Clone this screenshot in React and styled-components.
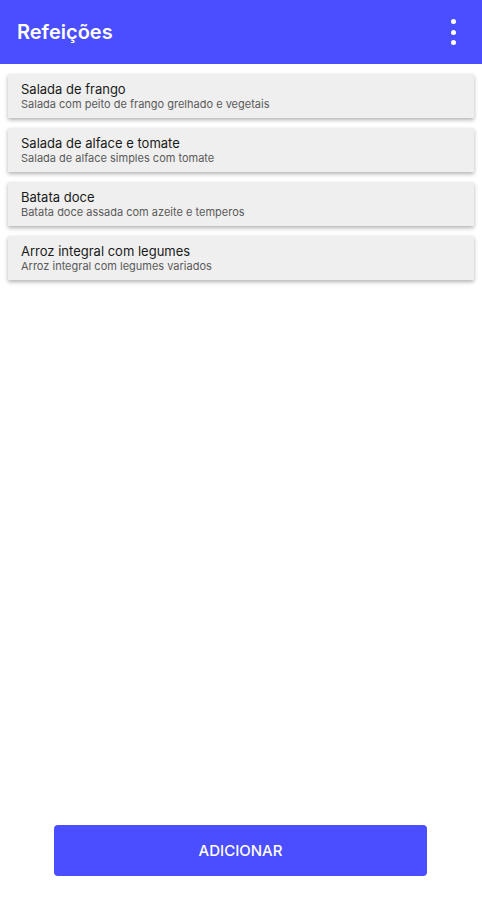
import styled, { createGlobalStyle } from "styled-components";

const GlobalStyle = createGlobalStyle`
  html, body {
    margin: 0;
    padding: 0;
    background: #ffffff;
    font-family: "Inter", "Noto Sans", sans-serif;
  }
`;

const Screen = styled.div`
  display: flex;
  flex-direction: column;
  height: 917px;
  background: #ffffff;
`;

const Header = styled.header`
  display: flex;
  align-items: center;
  justify-content: space-between;
  height: 64px;
  padding: 0 26px 0 17px;
  background: #4a4eff;
  color: #ffffff;
  flex-shrink: 0;
`;

const Title = styled.h1`
  margin: 0;
  font-size: 20px;
  font-weight: 600;
`;

const MenuButton = styled.button`
  display: flex;
  flex-direction: column;
  align-items: center;
  gap: 5.5px;
  padding: 0;
  border: none;
  background: none;
  cursor: pointer;
`;

const Dot = styled.span`
  width: 5px;
  height: 5px;
  border-radius: 50%;
  background: #ffffff;
`;

const List = styled.ul`
  display: flex;
  flex-direction: column;
  gap: 10px;
  margin: 0;
  padding: 10px 8px;
  list-style: none;
  flex: 1;
`;

const Card = styled.li`
  display: flex;
  flex-direction: column;
  justify-content: center;
  height: 44px;
  padding: 0 13px;
  background: #efefef;
  box-shadow: 0 2px 4px rgba(0, 0, 0, 0.3);
`;

const CardTitle = styled.div`
  font-size: 13px;
  line-height: 16px;
  color: #1a1a1a;
`;

const CardText = styled.div`
  font-size: 11px;
  line-height: 14px;
  color: #5a5a5a;
`;

const Footer = styled.div`
  display: flex;
  padding: 0 0 41px 54px;
`;

const AddButton = styled.button`
  width: 373px;
  height: 51px;
  border: none;
  border-radius: 4px;
  background: #4a4eff;
  color: #ffffff;
  font-family: "Inter", "Noto Sans", sans-serif;
  font-size: 15px;
  font-weight: 500;
  cursor: pointer;
`;

const meals = [
  { name: "Salada de frango", desc: "Salada com peito de frango grelhado e vegetais" },
  { name: "Salada de alface e tomate", desc: "Salada de alface simples com tomate" },
  { name: "Batata doce", desc: "Batata doce assada com azeite e temperos" },
  { name: "Arroz integral com legumes", desc: "Arroz integral com legumes variados" },
];

export default function App() {
  return (
    <>
      <GlobalStyle />
      <Screen>
        <Header>
          <Title>Refeições</Title>
          <MenuButton aria-label="menu">
            <Dot />
            <Dot />
            <Dot />
          </MenuButton>
        </Header>
        <List>
          {meals.map((meal) => (
            <Card key={meal.name}>
              <CardTitle>{meal.name}</CardTitle>
              <CardText>{meal.desc}</CardText>
            </Card>
          ))}
        </List>
        <Footer>
          <AddButton>ADICIONAR</AddButton>
        </Footer>
      </Screen>
    </>
  );
}
